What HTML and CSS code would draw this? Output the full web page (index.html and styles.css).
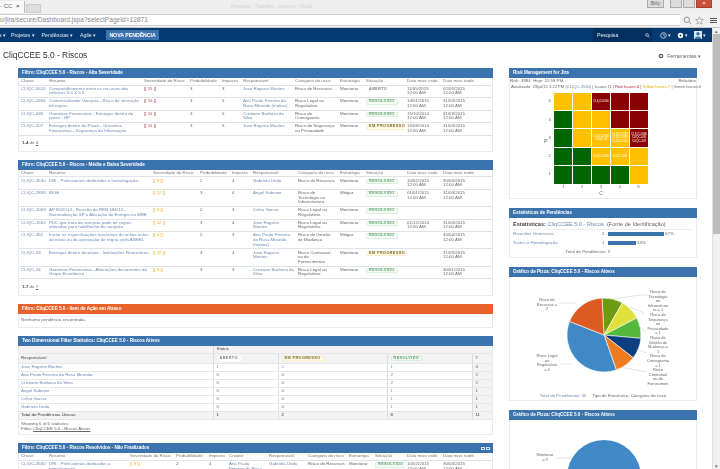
FILE: index.html
```html
<!DOCTYPE html>
<html lang="pt-br">
<head>
    <meta charset="UTF-8">
    <title>CliqCCEE 5.0 - Riscos</title>
    <link rel="stylesheet" href="styles.css">
</head>
<body>
<div class="shell">

    <!-- janela do navegador -->
    <div class="tabstrip">
        <div class="tab">- CC <span class="tab-x">×</span></div>
        <div class="tab-new"></div>
        <div class="tab-ghost">Pessoas · Trabalho · Arquivo · Ajuda</div>
        <div class="winbtns">
            <span class="winbtn winbtn-text">Bitly</span>
            <span class="winbtn winbtn-min"></span>
            <span class="winbtn winbtn-max"></span>
            <span class="winbtn winbtn-close">×</span>
        </div>
    </div>
    <div class="urlbar">
        <div class="urlfield">u/jira/secure/Dashboard.jspa?selectPageId=12871</div>
        <svg class="urlicon" viewBox="0 0 10 10"><circle cx="4.2" cy="4.2" r="3" fill="none" stroke="#888"/><path d="M6.5 6.5L9 9" stroke="#888"/></svg>
        <svg class="urlicon" viewBox="0 0 10 10"><path d="M5 .8l1.3 2.9 3.1.3-2.4 2 .8 3.1L5 7.5 2.200 9.100 3 6 .6 4l3.100-.3z" fill="none" stroke="#999" stroke-width=".8"/></svg>
        <div class="urlmenu"><i></i><i></i><i></i></div>
    </div>

    <div class="frame">
        <div class="pagewrap">
            <nav class="nav">
                <span class="nav-item nav-cut">s ▾</span>
                <span class="nav-item">Projetos ▾</span>
                <span class="nav-item">Pendências ▾</span>
                <span class="nav-item">Agile ▾</span>
                <span class="nav-create">NOVA PENDÊNCIA</span>
                <div class="nav-right">
                    <div class="nav-search"><span>Pesquisa</span>
                        <svg class="nav-icon-sm" viewBox="0 0 10 10"><circle cx="4" cy="4" r="2.800" fill="none" stroke="#cde" stroke-width="1.300"/><path d="M6 6l3 3" stroke="#cde" stroke-width="1.300"/></svg>
                    </div>
                    <span class="nav-glyph">
                        <svg class="nav-icon" viewBox="0 0 10 10"><circle cx="5" cy="5" r="4" fill="none" stroke="#dde" stroke-width="1.200"/><path d="M4 3.500h2v3.500" fill="none" stroke="#dde"/></svg> ▾
                    </span>
                    <span class="nav-glyph">
                        <svg class="nav-icon" viewBox="0 0 10 10"><circle cx="5" cy="5" r="2.600" fill="none" stroke="#fff" stroke-width="2.400"/></svg> ▾
                    </span>
                    <span class="nav-glyph">
                        <span class="avatar"><svg viewBox="0 0 10 10"><circle cx="5" cy="3.500" r="2.200" fill="#3b73af"/><path d="M1 10c0-4 8-4 8 0z" fill="#3b73af"/></svg></span> ▾
                    </span>
                </div>
            </nav>

            <div class="titlebar">
                <h1>CliqCCEE 5.0 - Riscos</h1>
                <span class="tools">
                    <svg class="tools-icon" viewBox="0 0 10 10"><circle cx="5" cy="5" r="2.800" fill="none" stroke="#555" stroke-width="2.200"/></svg>
                    Ferramentas ▾
                </span>
            </div>

            <div class="columns">
                <div class="col-left">

                    <section class="gadget">
                        <h2 class="gadget-title">Filtro: CliqCCEE 5.0 - Riscos - Alta Severidade</h2>
                        <table class="issues">
                            <colgroup><col class="c-key"><col class="c-sum"><col class="c-sev"><col class="c-pro"><col class="c-imp"><col class="c-res"><col class="c-cat"><col class="c-est"><col class="c-sit"><col class="c-d1"><col class="c-d2"></colgroup>
                            <thead><tr><th>Chave</th><th>Resumo</th><th>Severidade do Risco</th><th>Probabilidade</th><th>Impacto</th><th>Responsável</th><th>Categoria do risco</th><th>Estratégia</th><th>Situação</th><th>Data mais cedo</th><th>Data mais tarde</th></tr></thead>
                            <tbody>
                                <tr><td><a>CLIQC-5520</a></td><td><a>Compartilhamento entre os recursos das releases 5.0 X 5.5</a></td><td class="sev-high">[[ 15 ]]</td><td>3</td><td>3</td><td><a>Jose Rogerio Martins</a></td><td>Risco de Recursos</td><td>Monitorar</td><td><span class="lozenge lz-open">ABERTO</span></td><td>11/05/2015<br>12:00 AM</td><td>02/06/2015<br>12:00 AM</td></tr>
                                <tr><td><a>CLIQC-2666</a></td><td><a>Comercializador Varejista - Risco de alteração de regras</a></td><td class="sev-high">[[ 15 ]]</td><td>3</td><td>5</td><td><a>Ana Paula Ferreira da Rosa Miranda (matias)</a></td><td>Risco Legal ou Regulatório</td><td>Monitorar</td><td><span class="lozenge lz-done">RESOLVIDO</span></td><td>14/01/2015<br>12:00 AM</td><td>31/03/2015<br>12:00 AM</td></tr>
                                <tr><td><a>CLIQC-636</a></td><td><a>Garantias Financeiras - Entregas dentro do prazo - HP</a></td><td class="sev-high">[[ 15 ]]</td><td>3</td><td>5</td><td><a>Cristiane Barbosa da Silva</a></td><td>Risco de Cronograma</td><td>Monitorar</td><td><span class="lozenge lz-done">RESOLVIDO</span></td><td>15/10/2014<br>12:00 AM</td><td>31/03/2015<br>12:00 AM</td></tr>
                                <tr><td><a>CLIQC-207</a></td><td><a>Entregas dentro do Prazo - Garantias Financeiras - Segurança da Informação</a></td><td class="sev-high">[[ 15 ]]</td><td>3</td><td>5</td><td><a>Jose Rogerio Martins</a></td><td>Risco de Segurança ou Privacidade</td><td>Monitorar</td><td><span class="lozenge lz-prog">EM PROGRESSO</span></td><td>16/09/2014<br>12:00 AM</td><td>31/03/2015<br>12:00 AM</td></tr>
                            </tbody>
                        </table>
                        <p class="count"><b>1-4</b> de <u>4</u></p>
                    </section>

                    <section class="gadget">
                        <h2 class="gadget-title">Filtro: CliqCCEE 5.0 - Riscos - Média e Baixa Severidade</h2>
                        <table class="issues">
                            <colgroup><col class="c-key"><col class="g-sum"><col class="g-sev"><col class="c-pro"><col class="c-imp"><col class="g-res"><col class="g-cat"><col class="c-est"><col class="c-sit"><col class="c-d1"><col class="c-d2"></colgroup>
                            <thead><tr><th>Chave</th><th>Resumo</th><th>Severidade do Risco</th><th>Probabilidade</th><th>Impacto</th><th>Responsável</th><th>Categoria do risco</th><th>Estratégia</th><th>Situação</th><th>Data mais cedo</th><th>Data mais tarde</th></tr></thead>
                            <tbody>
                                <tr><td><a>CLIQC-3530</a></td><td><a>DRI - Profissionais dedicados a homologação</a></td><td class="sev-mid">[[ 8 ]]</td><td>2</td><td>4</td><td><a>Gabriela Ueda</a></td><td>Risco de Recursos</td><td>Monitorar</td><td><span class="lozenge lz-done">RESOLVIDO</span></td><td>10/02/2015<br>12:00 AM</td><td>30/04/2015<br>12:00 AM</td></tr>
                                <tr><td><a>CLIQC-2859</a></td><td><a>BIGE</a></td><td class="sev-mid">[[ 12 ]]</td><td>3</td><td>4</td><td><a>Angel Sabione</a></td><td>Risco de<br>Tecnologia ou<br>Infraestrutura</td><td>Mitigar</td><td><span class="lozenge lz-done">RESOLVIDO</span></td><td>01/01/2015<br>12:00 AM</td><td>31/03/2015<br>12:00 AM</td></tr>
                                <tr><td><a>CLIQC-1069</a></td><td><a>AP 85/2014 - Revisão da REN 584/13 - Sazonalização SP e Alocação de Energia no MRE</a></td><td class="sev-mid">[[ 6 ]]</td><td>2</td><td>3</td><td><a>Celso Garcia</a></td><td>Risco Legal ou Regulatório</td><td>Monitorar</td><td><span class="lozenge lz-done">RESOLVIDO</span></td><td></td><td></td></tr>
                                <tr><td><a>CLIQC-1562</a></td><td><a>PDC que trata do varejista pode ter regras alteradas para habilitação do varejista</a></td><td class="sev-mid">[[ 12 ]]</td><td>3</td><td>4</td><td><a>Jose Rogerio Martins</a></td><td>Risco Legal ou Regulatório</td><td>Monitorar</td><td><span class="lozenge lz-done">RESOLVIDO</span></td><td>01/12/2014<br>12:00 AM</td><td>31/03/2015<br>12:00 AM</td></tr>
                                <tr><td><a>CLIQC-362</a></td><td><a>Iniciar as especificações funcionais do online antes do envio ou da aprovação de regras pela ANEEL</a></td><td class="sev-mid">[[ 6 ]]</td><td>2</td><td>3</td><td><a>Ana Paula Ferreira da Rosa Miranda (matias)</a></td><td>Risco de Gestão de Mudança</td><td>Mitigar</td><td><span class="lozenge lz-done">RESOLVIDO</span></td><td></td><td>30/04/2015<br>12:00 AM</td></tr>
                                <tr><td><a>CLIQC-33</a></td><td><a>Entregas dentro do prazo - Instituições Financeiras</a></td><td class="sev-mid">[[ 12 ]]</td><td>3</td><td>4</td><td><a>Jose Rogerio Martins</a></td><td>Risco Contratual<br>ou de<br>Fornecimento</td><td>Monitorar</td><td><span class="lozenge lz-prog">EM PROGRESSO</span></td><td></td><td>31/03/2015<br>12:00 AM</td></tr>
                                <tr><td><a>CLIQC-34</a></td><td><a>Garantias Financeiras - Alterações decorrentes do Grupo Econômico</a></td><td class="sev-mid">[[ 9 ]]</td><td>3</td><td>3</td><td><a>Cristiane Barbosa da Silva</a></td><td>Risco Legal ou Regulatório</td><td>Monitorar</td><td><span class="lozenge lz-done">RESOLVIDO</span></td><td></td><td>30/01/2015<br>12:00 AM</td></tr>
                            </tbody>
                        </table>
                        <p class="count count-tall"><b>1-7</b> de <u>7</u></p>
                    </section>

                    <section class="gadget">
                        <h2 class="gadget-title gadget-orange">Filtro: CliqCCEE 5.0 - Item de Ação em Atraso</h2>
                        <p class="empty">Nenhuma pendência encontrada.</p>
                    </section>

                    <section class="gadget">
                        <h2 class="gadget-title">Two Dimensional Filter Statistics: CliqCCEE 5.0 - Riscos Ativos</h2>
                        <table class="matrix">
                            <colgroup><col class="m-res"><col class="m-a"><col class="m-b"><col class="m-c"><col class="m-t"></colgroup>
                            <thead>
                                <tr class="m-top"><th></th><th colspan="4">Status</th></tr>
                                <tr class="m-sub"><th>Responsável</th><th><span class="lozenge lz-open">ABERTO</span></th><th><span class="lozenge lz-prog">EM PROGRESSO</span></th><th><span class="lozenge lz-done">RESOLVIDO</span></th><th>T</th></tr>
                            </thead>
                            <tbody>
                                <tr><td><a>Jose Rogerio Martins</a></td><td><a>1</a></td><td><a>2</a></td><td><a>1</a></td><td class="m-total">4</td></tr>
                                <tr><td><a>Ana Paula Ferreira da Rosa Miranda</a></td><td>0</td><td>0</td><td><a>2</a></td><td class="m-total">2</td></tr>
                                <tr><td><a>Cristiane Barbosa da Silva</a></td><td>0</td><td>0</td><td><a>2</a></td><td class="m-total">2</td></tr>
                                <tr><td><a>Angel Sabione</a></td><td>0</td><td>0</td><td><a>1</a></td><td class="m-total">1</td></tr>
                                <tr><td><a>Celso Garcia</a></td><td>0</td><td>0</td><td><a>1</a></td><td class="m-total">1</td></tr>
                                <tr><td><a>Gabriela Ueda</a></td><td>0</td><td>0</td><td><a>1</a></td><td class="m-total">1</td></tr>
                                <tr class="m-sum"><td>Total de Pendências Únicas:</td><td>1</td><td>2</td><td>8</td><td>11</td></tr>
                            </tbody>
                        </table>
                        <p class="matrix-foot">Showing 6 of 6 statistics<br>Filtro: <u>CliqCCEE 5.0 - Riscos Ativos</u></p>
                    </section>

                    <section class="gadget">
                        <h2 class="gadget-title gadget-split">Filtro: CliqCCEE 5.0 - Riscos Resolvidos - Não Finalizados
                            <span class="title-icons"><i></i><i></i></span>
                        </h2>
                        <table class="issues">
                            <colgroup><col class="c-key"><col class="l-sum"><col class="c-sev"><col class="l-pro"><col class="l-imp"><col class="l-cri"><col class="l-res"><col class="l-cat"><col class="c-est"><col class="l-sit"><col class="c-d1"><col class="c-d2"></colgroup>
                            <thead><tr><th>Chave</th><th>Resumo</th><th>Severidade do Risco</th><th>Probabilidade</th><th>Impacto</th><th>Criador</th><th>Responsável</th><th>Categoria do risco</th><th>Estratégia</th><th>Situação</th><th>Data mais cedo</th><th>Data mais tarde</th></tr></thead>
                            <tbody>
                                <tr><td><a>CLIQC-3530</a></td><td><a>DRI - Profissionais dedicados a homologação</a></td><td class="sev-mid">[[ 8 ]]</td><td>2</td><td>4</td><td><a>Ana Paula Ferreira da Rosa</a></td><td><a>Gabriela Ueda</a></td><td>Risco de Recursos</td><td>Monitorar</td><td><span class="lozenge lz-done">RESOLVIDO</span></td><td>10/02/2015<br>12:00 AM</td><td>30/04/2015<br>12:00 AM</td></tr>
                            </tbody>
                        </table>
                    </section>
                </div>

                <div class="col-right">
                    <section class="gadget">
                        <h2 class="gadget-title">Risk Management for Jira</h2>
                        <div class="risk-meta"><span>Risk: 3884 &nbsp;Hoje: 11:59 PM</span><span>Relatório</span></div>
                        <div class="risk-legend">Atualizado: 23/jul/15 5:22 PM (<a>CLIQC-3530</a>) | Issues:11 | <span class="t-red">Red Issues:4</span> | <span class="t-yel">Yellow Issues:7</span> | Green Issues:0</div>
                        <div class="heat">
                            <span class="heat-axis heat-p">P</span>
                            <div class="heat-rows">
                                <span>5</span><span>4</span><span>3</span><span>2</span><span>1</span>
                            </div>
                            <div class="heat-grid">
                                <div class="y"></div><div class="y"></div><div class="r">CLIQC-0000</div><div class="r"></div><div class="r"></div>
                                <div class="g"></div><div class="y"></div><div class="y"></div><div class="r"></div><div class="r"></div>
                                <div class="g"></div><div class="y"></div><div class="y">CLIQC-3530<br>CLIQC-33</div><div class="y">CLIQC-1562<br>CLIQC-2859<br>CLIQC-5520</div><div class="r">CLIQC-2666<br>CLIQC-636<br>CLIQC-207</div>
                                <div class="g"></div><div class="g"></div><div class="y">CLIQC-1069</div><div class="y">CLIQC-362</div><div class="y"></div>
                                <div class="g"></div><div class="g"></div><div class="g"></div><div class="g"></div><div class="y"></div>
                            </div>
                            <div class="heat-cols"><span>1</span><span>2</span><span>3</span><span>4</span><span>5</span></div>
                            <div class="heat-c">C</div>
                        </div>
                    </section>

                    <section class="gadget">
                        <h2 class="gadget-title">Estatísticas de Pendências</h2>
                        <div class="stats">
                            <div class="stats-head"><b>Estatísticas:</b> <a>CliqCCEE 5.0 - Riscos</a> &nbsp;(Fonte de Identificação)</div>
                            <div class="stats-row"><a>Reuniões Gerenciais</a><span class="stats-n">2</span><span class="bar bar-67"></span><span>67%</span></div>
                            <div class="stats-row"><a>Testes e Homologação</a><span class="stats-n">1</span><span class="bar bar-33"></span><span>33%</span></div>
                            <div class="stats-total">Total de Pendências: 3</div>
                        </div>
                    </section>

                    <section class="gadget">
                        <h2 class="gadget-title">Gráfico de Pizza: CliqCCEE 5.0 - Riscos Ativos</h2>
                        <svg class="pie" viewBox="0 0 186 112">
                            <g stroke="#fff" stroke-width=".6">
                                <path fill="#6b9b13" d="M94 58L92.06 21.05A37 37 0 0 1 112.33 25.86Z"/>
                                <path fill="#dfe03a" d="M94 58L112.33 25.86A37 37 0 0 1 126.82 40.92Z"/>
                                <path fill="#54b83c" d="M94 58L126.82 40.92A37 37 0 0 1 130.85 61.35Z"/>
                                <path fill="#0b3f82" d="M94 58L130.85 61.35A37 37 0 0 1 123.2 80.73Z"/>
                                <path fill="#f07c22" d="M94 58L123.2 80.73A37 37 0 0 1 106.29 92.9Z"/>
                                <path fill="#3f8ac6" d="M94 58L106.29 92.9A37 37 0 0 1 59.58 44.44Z"/>
                                <path fill="#dd5a22" d="M94 58L59.58 44.44A37 37 0 0 1 92.06 21.05Z"/>
                            </g>
                            <g class="pie-lines">
                                <path d="M48 26H66"/><path d="M103 22L130 18H138"/><path d="M120 30L134 36"/>
                                <path d="M128 48L136 56"/><path d="M126 72L137 76"/><path d="M110 90L137 95"/><path d="M50 87H62"/>
                            </g>
                            <g class="pie-labels">
                                <text x="37" y="24">Risco de</text><text x="37" y="28.6">Recursos =</text><text x="37" y="33.2">2</text>
                                <text x="148" y="16">Risco de</text><text x="148" y="20.6">Tecnologia</text><text x="148" y="25.200">ou</text><text x="148" y="29.8">Infraestrutu</text><text x="148" y="34.4">ra = 1</text>
                                <text x="148" y="39">Risco de</text><text x="148" y="43.6">Segurança</text><text x="148" y="48.2">ou</text><text x="148" y="52.8">Privacidade</text><text x="148" y="57.4">= 1</text>
                                <text x="148" y="62">Risco de</text><text x="148" y="66.6">Gestão de</text><text x="148" y="71.2">Mudança =</text><text x="148" y="75.8">1</text>
                                <text x="148" y="80.4">Risco de</text><text x="148" y="85">Cronograma</text><text x="148" y="89.6">= 1</text>
                                <text x="148" y="94.2">Risco</text><text x="148" y="98.8">Contratual</text><text x="148" y="103.4">ou de</text><text x="148" y="108">Fornecimen</text>
                                <text x="37" y="80">Risco Legal</text><text x="37" y="84.6">ou</text><text x="37" y="89.2">Regulatório</text><text x="37" y="93.8">= 4</text>
                            </g>
                        </svg>
                        <p class="pie-foot"><a>Total de Pendências:</a> 11 &nbsp; &nbsp; Tipo de Estatística: Categoria do risco</p>
                    </section>

                    <section class="gadget">
                        <h2 class="gadget-title">Gráfico de Pizza: CliqCCEE 5.0 - Riscos Ativos</h2>
                        <svg class="pie" viewBox="0 0 186 112">
                            <circle cx="94" cy="57" r="37" fill="#3f8ac6"/>
                            <path class="pie-lines" d="M45 38H62"/>
                            <g class="pie-labels">
                                <text x="35" y="36">Monitorar</text><text x="35" y="41">= 9</text>
                            </g>
                        </svg>
                    </section>
                </div>
            </div>
        </div>
        <div class="scrollbar">
            <span class="scroll-up">▴</span>
            <div class="scroll-thumb"></div>
            <span class="scroll-down">▾</span>
        </div>
    </div>
</div>
</body>
</html>
```

FILE: styles.css
```css
* {
    box-sizing: border-box;
}

html, body {
    margin: 0;
    height: 100%;
    overflow: hidden;
    background: #fff;
}

body {
    font-family: "Liberation Sans", Arial, sans-serif;
    font-size: 4.4px;
    line-height: 4.6px;
    color: #666;
}

.shell {
    height: 469px;
    display: flex;
    flex-direction: column;
    overflow: hidden;
    filter: blur(0.35px);
}

a {
    color: #6a8bb2;
}

/* janela do navegador */
.tabstrip {
    height: 13px;
    flex: none;
    display: flex;
    align-items: flex-end;
    background: #eeeeee;
}

.tab {
    width: 25px;
    height: 12px;
    background: #fafafa;
    border-right: 1px solid #bbb;
    font-size: 6px;
    line-height: 11px;
    color: #666;
    white-space: nowrap;
}

.tab-x {
    margin-left: 2px;
    font-weight: bold;
}

.tab-new {
    width: 15px;
    height: 9px;
    margin-left: 1px;
    background: #ddd;
    border: 1px solid #ccc;
}

.tab-ghost {
    margin-left: 190px;
    align-self: center;
    font-size: 5px;
    color: #d4d4d4;
    white-space: nowrap;
}

.winbtns {
    margin-left: auto;
    margin-right: 8px;
    align-self: flex-start;
    display: flex;
    gap: 1px;
}

.winbtn {
    height: 8px;
    background: #dcdcdc;
    border: 1px solid #aaa;
    border-top: none;
    font-size: 5px;
    line-height: 7px;
    text-align: center;
    color: #666;
}

.winbtn-text {
    width: 17px;
    margin-right: 5px;
}

.winbtn-min, .winbtn-max {
    width: 12px;
}

.winbtn-close {
    width: 16px;
    background: #c9503c;
    border-color: #a8402f;
    color: #fff;
}

.urlbar {
    height: 15px;
    flex: none;
    display: flex;
    align-items: center;
    gap: 3px;
    background: #f1f1f1;
    border-bottom: 1px solid #c8c8c8;
    padding-right: 3px;
}

.urlfield {
    flex: 1;
    height: 12px;
    background: #fff;
    border-top: 1px solid #cfcfcf;
    border-bottom: 1px solid #cfcfcf;
    font-size: 6.6px;
    line-height: 10px;
    color: #888;
    white-space: nowrap;
}

.urlicon {
    width: 9px;
    height: 9px;
}

.urlmenu {
    width: 7px;
    margin-left: 3px;
    display: flex;
    flex-direction: column;
    gap: 1px;
}

.urlmenu i {
    height: 1px;
    background: #555;
}

.frame {
    flex: 1;
    display: flex;
    min-height: 0;
}

.pagewrap {
    flex: 1;
    min-width: 0;
}

/* barra de navegacao */
.nav {
    height: 14px;
    display: flex;
    align-items: center;
    background: #053a72;
    color: #e3ebf3;
    font-size: 5.2px;
}

.nav-item {
    margin-right: 7px;
    white-space: nowrap;
}

.nav-cut {
    margin-right: 5px;
    margin-left: -1px;
}

.nav-create {
    width: 53px;
    height: 10px;
    margin-left: 3px;
    background: #3b73af;
    color: #fff;
    font-weight: bold;
    line-height: 10px;
    text-align: center;
    white-space: nowrap;
}

.nav-right {
    margin-left: auto;
    display: flex;
    align-items: center;
    height: 100%;
}

.nav-search {
    width: 59px;
    height: 100%;
    display: flex;
    align-items: center;
    justify-content: space-between;
    padding: 0 2px 0 4px;
    background: #04305f;
    margin-right: 8px;
}

.nav-icon-sm {
    width: 5px;
    height: 5px;
}

.nav-glyph {
    display: flex;
    align-items: center;
    gap: 1px;
    margin-right: 6px;
}

.nav-icon {
    width: 7px;
    height: 7px;
}

.avatar {
    width: 8px;
    height: 8px;
    background: #dfe9f5;
    display: block;
}

.avatar svg {
    display: block;
}

/* conteudo */
.titlebar {
    height: 26px;
    display: flex;
    justify-content: space-between;
    align-items: flex-start;
    padding: 8px 11px 0 3px;
}

.titlebar h1 {
    margin: 0;
    font-size: 8.4px;
    line-height: 10px;
    font-weight: normal;
    color: #333;
}

.tools {
    display: flex;
    align-items: center;
    gap: 3px;
    padding-top: 3px;
    font-size: 5.2px;
    color: #666;
}

.tools-icon {
    width: 6px;
    height: 6px;
}

.columns {
    display: flex;
    align-items: flex-start;
    gap: 16px;
    padding-left: 18px;
}

.col-left {
    width: 475px;
    flex: none;
}

.col-right {
    width: 188px;
    flex: none;
}

.gadget {
    border: 1px solid #e6ebf1;
    border-top: none;
    margin-bottom: 8px;
}

.col-right .gadget {
    margin-bottom: 9px;
}

.gadget-title {
    height: 10px;
    margin: 0 -1px;
    padding-left: 4px;
    background: #3b73af;
    color: #fff;
    font-size: 4.6px;
    line-height: 10px;
    font-weight: bold;
    white-space: nowrap;
}

.gadget-orange {
    background: #e8622a;
}

.gadget-split {
    display: flex;
    justify-content: space-between;
    align-items: center;
}

.title-icons {
    display: flex;
    gap: 1px;
    margin-right: 3px;
}

.title-icons i {
    width: 4px;
    height: 3px;
    border: 1px solid #cfe0f2;
}

table {
    width: 100%;
    table-layout: fixed;
    border-collapse: collapse;
}

.issues th {
    height: 7px;
    padding: 0 0 0 2px;
    text-align: left;
    font-weight: normal;
    color: #777;
    white-space: nowrap;
    border-bottom: 1px solid #dfe3e8;
}

.issues td {
    padding: 1.2px 2px;
    vertical-align: top;
    border-bottom: 1px solid #dfe3e8;
    overflow: hidden;
}

.issues td:first-child {
    white-space: nowrap;
}

.c-key { width: 28px; }
.c-sum { width: 95px; }
.c-sev { width: 46px; }
.c-pro { width: 32px; }
.c-imp { width: 21px; }
.c-res { width: 52px; }
.c-cat { width: 45px; }
.c-est { width: 26px; }
.c-sit { width: 41px; }
.c-d1 { width: 36px; }
.c-d2 { width: 51px; }

.g-sum { width: 104px; }
.g-sev { width: 47px; }
.g-res { width: 45px; }
.g-cat { width: 42px; }

.l-sum { width: 81px; }
.l-pro { width: 33px; }
.l-imp { width: 20px; }
.l-cri { width: 40px; }
.l-res { width: 39px; }
.l-cat { width: 41px; }
.l-sit { width: 32px; }

.sev-high {
    color: #b3474b;
}

.sev-mid {
    color: #f0b020;
}

.lozenge {
    display: inline-block;
    padding: 0 2px;
    border: 1px solid;
    border-radius: 1px;
    font-size: 3.8px;
    line-height: 3.4px;
    font-weight: bold;
    letter-spacing: 0.4px;
    white-space: nowrap;
}

.lz-open {
    color: #808080;
    background: #fff;
    border-color: #fff;
}

.lz-done {
    color: #5da36b;
    background: #f5fbf5;
    border-color: #dceede;
}

.lz-prog {
    color: #7a6a30;
    background: #fffbe8;
    border-color: #fbeecb;
}

.count {
    margin: 0;
    padding: 5.5px 3px 5px;
}

.count-tall {
    padding: 6px 3px 5px;
}

.count b {
    color: #444;
}

.empty {
    margin: 0;
    padding: 4.5px 2px 4.5px;
}

/* tabela de duas dimensoes */
.matrix th, .matrix td {
    padding: 0 0 0 3px;
    text-align: left;
    white-space: nowrap;
    border-bottom: 1px solid #e6e6e6;
    border-left: 1px solid #dcdcdc;
    font-weight: normal;
}

.matrix th:first-child, .matrix td:first-child {
    border-left: none;
    padding-left: 2px;
}

.matrix tbody tr {
    height: 8px;
}

.matrix thead th {
    background: #f3f3f3;
}

.m-top {
    height: 7px;
}

.m-sub {
    height: 10px;
}

.m-sub th:first-child, .m-top th {
    color: #444;
}

.m-res { width: 194px; }
.m-a { width: 65px; }
.m-b { width: 109px; }
.m-c { width: 85px; }
.m-t { width: 20px; }

.matrix .m-total {
    background: #f3f3f3;
}

.matrix .m-sum td {
    background: #f3f3f3;
    color: #333;
}

.matrix-foot {
    margin: 0;
    padding: 1px 2px 2.5px;
    line-height: 5.6px;
}

/* coluna direita */
.risk-meta {
    display: flex;
    justify-content: space-between;
    padding: 0.5px 0 1px;
}

.risk-legend {
    padding: 1px 0 0 1px;
    white-space: nowrap;
    font-size: 4.1px;
}

.t-red {
    color: #b3262b;
}

.t-yel {
    color: #e6ab00;
}

.heat {
    display: grid;
    grid-template-columns: 44px 94px;
    grid-template-rows: 91px 7px 6px;
    margin-top: 3px;
    padding-bottom: 1px;
    position: relative;
}

.heat-p {
    position: absolute;
    left: 34px;
    top: 46px;
    font-size: 5.4px;
}

.heat-rows {
    display: grid;
    grid-template-rows: repeat(5, 1fr);
    justify-items: end;
    align-items: center;
    padding-right: 3px;
}

.heat-grid {
    display: grid;
    grid-template-columns: repeat(5, minmax(0, 1fr));
    grid-template-rows: repeat(5, minmax(0, 1fr));
    gap: 1px;
}

.heat-grid div {
    display: flex;
    align-items: center;
    justify-content: center;
    text-align: center;
    color: #fff;
    font-size: 2.8px;
    line-height: 3.6px;
    white-space: nowrap;
    overflow: hidden;
}

.y { background: #ffc000; }
.r { background: #8b0000; }
.g { background: #006400; }

.heat-cols {
    grid-column: 2;
    display: grid;
    grid-template-columns: repeat(5, 1fr);
    justify-items: center;
    align-items: center;
}

.heat-c {
    grid-column: 2;
    text-align: center;
    font-size: 5px;
}

.stats {
    padding: 3px 3px 3px;
}

.stats-head {
    padding-bottom: 2px;
    font-size: 5.6px;
    line-height: 6px;
    white-space: nowrap;
    border-bottom: 1px solid #eee;
}

.stats-head b {
    color: #444;
}

.stats-row {
    display: flex;
    align-items: center;
    height: 9px;
    gap: 1px;
    white-space: nowrap;
}

.stats-row a {
    width: 88px;
}

.stats-n {
    width: 5px;
}

.bar {
    height: 4px;
    background: #3b73af;
}

.bar-67 { width: 56px; }
.bar-33 { width: 28px; }

.stats-total {
    width: 97px;
    text-align: right;
    padding-top: 2px;
}

.pie {
    display: block;
    width: 186px;
    height: 112px;
}

.pie-lines {
    fill: none;
    stroke: #bbb;
    stroke-width: 0.4;
}

.pie-labels text {
    font-size: 4px;
    text-anchor: middle;
    fill: #666;
}

.pie-foot {
    margin: 0;
    padding: 5px 0 1.5px;
    text-align: center;
    white-space: nowrap;
}

/* barra de rolagem */
.scrollbar {
    width: 8px;
    flex: none;
    background: #f1f1f1;
    border-left: 1px solid #e0e0e0;
    display: flex;
    flex-direction: column;
    font-size: 5px;
    line-height: 6px;
    text-align: center;
    color: #666;
}

.scroll-thumb {
    height: 200px;
    background: #bdbdbd;
}

.scroll-down {
    margin-top: auto;
}
```
